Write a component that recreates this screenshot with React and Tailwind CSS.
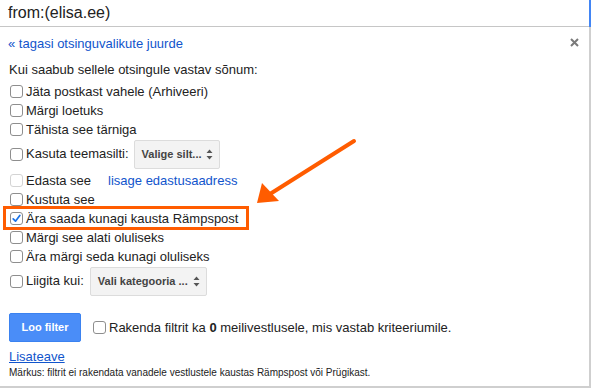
import React from "react";

function Box({ checked, disabled }) {
  return (
    <span
      className={`flex h-[13px] w-[13px] shrink-0 items-center justify-center rounded-[3px] border bg-white ${
        disabled ? "border-[#d4d4d4]" : "border-[#8e8e8e]"
      }`}
    >
      {checked && (
        <svg width="9" height="9" viewBox="0 0 9 9">
          <path d="M1.2 4.8 L3.5 7.2 L7.8 1.5" fill="none" stroke="#1a73e8" strokeWidth="1.7" strokeLinecap="round" strokeLinejoin="round" />
        </svg>
      )}
    </span>
  );
}

function Row({ label, checked, disabled, children, tall }) {
  return (
    <div className={`flex items-center pl-[10px] ${tall ? "h-[30px]" : "h-[19px]"}`}>
      <Box checked={checked} disabled={disabled} />
      <span className="ml-[3px] whitespace-nowrap">{label}</span>
      {children}
    </div>
  );
}

function Select({ label, width, className = "" }) {
  return (
    <div
      className={`flex h-[29px] items-center justify-between rounded-[2px] border border-[#dcdcdc] bg-[#f3f3f3] pl-[7px] pr-[6px] text-[11px] font-bold text-[#444] ${width} ${className}`}
    >
      <span className="whitespace-nowrap">{label}</span>
      <svg width="7" height="11" viewBox="0 0 7 11">
        <path d="M3.5 0.5 L6.5 4 H0.5 Z M3.5 10.5 L6.5 7 H0.5 Z" fill="#555" />
      </svg>
    </div>
  );
}

export default function App() {
  return (
    <div className="relative h-[388px] w-[591px] overflow-hidden bg-white font-['Liberation_Sans',Arial,sans-serif] text-[13px] text-[#222]">
      <div className="flex h-[27px]">
        <div className="flex flex-1 items-center border-b border-[#c6c6c6] pl-[8px] text-[16px] leading-none text-[#222]">
          from:(elisa.ee)
        </div>
        <div className="w-[2px] bg-[#4285f4]" />
      </div>

      <div className="relative h-[361px] w-[591px] border-b-2 border-r-2 border-[#cfcfcf] pt-[9px]">
        <svg className="absolute left-[570px] top-[11px]" width="9" height="9" viewBox="0 0 9 9">
          <path d="M1 1 L8 8 M8 1 L1 8" stroke="#7a7a7a" strokeWidth="2" />
        </svg>

        <div className="flex h-[16px] items-center pl-[8px] text-[#15c]">« tagasi otsinguvalikute juurde</div>
        <div className="mt-[10px] flex h-[16px] items-center pl-[9px]">Kui saabub sellele otsingule vastav sõnum:</div>

        <div className="mt-[4px]">
          <Row label="Jäta postkast vahele (Arhiveeri)" />
          <Row label="Märgi loetuks" />
          <Row label="Tähista see tärniga" />
          <Row label="Kasuta teemasilti:" tall>
            <Select label="Valige silt..." width="w-[86px]" className="ml-[5px]" />
          </Row>
          <div className="h-[2px]" />
          <Row label="Edasta see" disabled>
            <span className="ml-[17px] text-[#15c]">lisage edastusaadress</span>
          </Row>
          <Row label="Kustuta see" />
          <Row label="Ära saada kunagi kausta Rämpspost" checked />
          <Row label="Märgi see alati oluliseks" />
          <Row label="Ära märgi seda kunagi oluliseks" />
          <Row label="Liigita kui:" tall>
            <Select label="Vali kategooria ..." width="w-[117px]" className="ml-[6px]" />
          </Row>
        </div>

        <div className="mt-[17px] flex items-center pl-[9px]">
          <button className="flex h-[29px] w-[72px] items-center justify-center rounded-[2px] border border-[#3b82f0] bg-[#4a8df8] text-[11px] font-bold text-white">
            Loo filter
          </button>
          <span className="ml-[12px]">
            <Box />
          </span>
          <span className="ml-[3px]">
            Rakenda filtrit ka <b>0</b> meilivestlusele, mis vastab kriteeriumile.
          </span>
        </div>

        <div className="mt-[7px] flex h-[16px] items-center pl-[9px] text-[#15c] underline">Lisateave</div>
        <div className="flex h-[15px] items-center pl-[9px] text-[10px]">
          Märkus: filtrit ei rakendata vanadele vestlustele kaustas Rämpspost või Prügikast.
        </div>
      </div>

      <div className="absolute left-[3px] top-[206px] h-[24px] w-[246px] border-[3px] border-[#ff5c00]" />
      <svg className="absolute left-0 top-0" width="591" height="388" viewBox="0 0 591 388">
        <path d="M354 141 L270 194" stroke="#ff5c00" strokeWidth="4" strokeLinecap="round" />
        <path d="M257 203 L262 183 L279 201 Z" fill="#ff5c00" />
      </svg>
    </div>
  );
}
